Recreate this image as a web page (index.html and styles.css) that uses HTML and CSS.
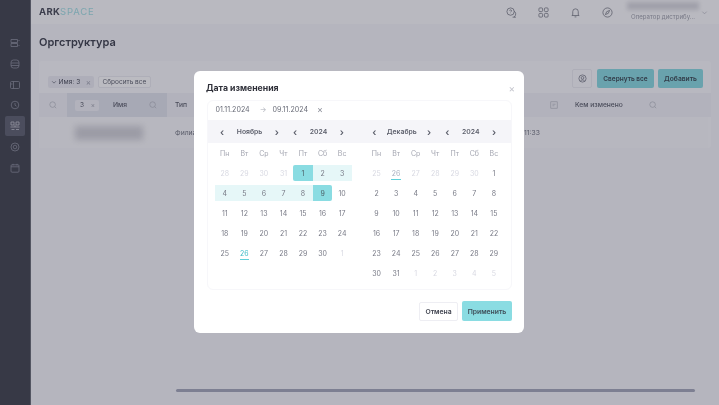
FILE: index.html
```html
<!DOCTYPE html>
<html>
<head>
  <meta charset="UTF-8" />
  <title>Оргструктура</title>
  <link rel="stylesheet" href="styles.css">
</head>
<body>

  <div class="app">
    <aside class="sidebar">
      <div class="side-item"><svg viewBox="0 0 10 10"><path d="M1 1.500h6.500v3H1zM1 5.500h6.500v3H1zM9 2v1M9 7v1"/></svg></div>
      <div class="side-item"><svg viewBox="0 0 10 10"><rect x="1" y="1" width="8" height="8" rx="2.500"/><path d="M1 4h8M1 6.500h8"/></svg></div>
      <div class="side-item"><svg viewBox="0 0 10 10"><rect x="0.500" y="1.500" width="9" height="7" rx="1"/><path d="M3.500 1.500v7M1 4h1.500"/></svg></div>
      <div class="side-item"><svg viewBox="0 0 10 10"><circle cx="5" cy="5" r="3.800"/><path d="M5 3v2.200l1.500 1"/></svg></div>
      <div class="side-item active"><svg viewBox="0 0 10 10"><path d="M1 1h3v3H1zM6 1h3v3H6zM0.500 6h9M1.500 8.500h3M6 8.500h3M5 4v2"/></svg></div>
      <div class="side-item"><svg viewBox="0 0 10 10"><circle cx="5" cy="5" r="4"/><circle cx="5" cy="5" r="1.800"/></svg></div>
      <div class="side-item"><svg viewBox="0 0 10 10"><rect x="1" y="1.800" width="8" height="7.400" rx="1"/><path d="M1 3.800h8M3 .8v1.600M7 .8v1.600"/></svg></div>
    </aside>

    <div class="main">
      <header class="top-bar">
        <div class="logo">ARK<span>SPACE</span></div>
        <div class="top-icons">
          <svg viewBox="0 0 12 12"><circle cx="5" cy="5" r="4"/><path d="M8.600 4.500a3.400 3.400 0 0 1 .4 6l1.400.6H7.200M4 4a1 1 0 1 1 1.400 1L5 5.800M5 7v.2"/></svg>
          <svg viewBox="0 0 12 12"><rect x="1" y="1" width="4" height="4" rx="1"/><rect x="7" y="1" width="4" height="4" rx="1"/><rect x="1" y="7" width="4" height="4" rx="1"/><rect x="7" y="7" width="4" height="4" rx="1"/></svg>
          <svg viewBox="0 0 12 12"><path d="M3 8.500V5a3 3 0 0 1 6 0v3.500l1 .8H2zM5 10.800h2"/></svg>
          <svg viewBox="0 0 12 12"><circle cx="6" cy="6" r="5"/><path d="M8.300 3.700 6.900 6.900 3.700 8.300 5.100 5.100z"/></svg>
        </div>
        <div class="user">
          <div class="user-name"></div>
          <div class="user-role">Оператор дистрибу...</div>
        </div>
        <svg class="user-arrow" viewBox="0 0 8 8"><path d="M1.500 3 4 5.500 6.500 3"/></svg>
      </header>

      <div class="content">
        <h1 class="page-title">Оргструктура</h1>

        <div class="card">
          <div class="toolbar">
            <div class="filters">
              <span class="chip">
                <svg viewBox="0 0 8 8"><path d="M1.500 3 4 5.500 6.500 3"/></svg>
                Имя: 3
                <i class="chip-x">×</i>
              </span>
              <span class="reset">Сбросить все</span>
            </div>
            <div class="actions">
              <button class="btn-icon"><svg viewBox="0 0 10 10"><circle cx="5" cy="5" r="4"/><circle cx="5" cy="4.300" r="1.500"/><path d="M2.500 8a3 3 0 0 1 5 0"/></svg></button>
              <button class="btn-teal wide">Свернуть все</button>
              <button class="btn-teal">Добавить</button>
            </div>
          </div>

          <div class="table-head">
            <div class="cell-search"><svg class="search" viewBox="0 0 10 10"><circle cx="4.500" cy="4.500" r="3.500"/><path d="m7 7 2 2"/></svg></div>
            <div class="cell-name">
              <span class="name-input">3 <i>×</i></span>
              <span class="head-label">Имя</span>
              <svg class="search" viewBox="0 0 10 10"><circle cx="4.500" cy="4.500" r="3.500"/><path d="m7 7 2 2"/></svg>
            </div>
            <span class="head-label type">Тип</span>
            <svg class="note" viewBox="0 0 10 10"><rect x="1" y="1" width="8" height="8"/><path d="M3 4h4M3 6h2.500"/></svg>
            <span class="head-label who">Кем изменено</span>
            <svg class="search" viewBox="0 0 10 10"><circle cx="4.500" cy="4.500" r="3.500"/><path d="m7 7 2 2"/></svg>
          </div>

          <div class="table-row">
            <div class="blur-name"></div>
            <span class="row-type">Филиал</span>
            <span class="row-time">11:33</span>
          </div>
        </div>
      </div>

      <div class="scroll-wrap"><div class="scroll-thumb"></div></div>
    </div>
  </div>

  <div class="overlay">
    <div class="modal">
      <div class="modal-head">
        <h2>Дата изменения</h2>
        <span class="close">×</span>
      </div>

      <div class="picker">
        <div class="range">
          <span>01.11.2024</span>
          <span class="arrow">→</span>
          <span>09.11.2024</span>
          <span class="clear">×</span>
        </div>

        <div class="months">
          <div class="month">
            <div class="month-head">
              <div class="switch"><b>‹</b><span>Ноябрь</span><b>›</b></div>
              <div class="switch year"><b>‹</b><span>2024</span><b>›</b></div>
            </div>
            <div class="days">
              <span class="wd">Пн</span><span class="wd">Вт</span><span class="wd">Ср</span><span class="wd">Чт</span><span class="wd">Пт</span><span class="wd">Сб</span><span class="wd">Вс</span>
              <span class="off">28</span><span class="off">29</span><span class="off">30</span><span class="off">31</span><span class="sel">1</span><span class="in">2</span><span class="in">3</span>
              <span class="in">4</span><span class="in">5</span><span class="in">6</span><span class="in">7</span><span class="in">8</span><span class="sel end">9</span><span>10</span>
              <span>11</span><span>12</span><span>13</span><span>14</span><span>15</span><span>16</span><span>17</span>
              <span>18</span><span>19</span><span>20</span><span>21</span><span>22</span><span>23</span><span>24</span>
              <span>25</span><span class="today">26</span><span>27</span><span>28</span><span>29</span><span>30</span><span class="off">1</span>
            </div>
          </div>

          <div class="month">
            <div class="month-head">
              <div class="switch"><b>‹</b><span>Декабрь</span><b>›</b></div>
              <div class="switch year"><b>‹</b><span>2024</span><b>›</b></div>
            </div>
            <div class="days">
              <span class="wd">Пн</span><span class="wd">Вт</span><span class="wd">Ср</span><span class="wd">Чт</span><span class="wd">Пт</span><span class="wd">Сб</span><span class="wd">Вс</span>
              <span class="off">25</span><span class="off today">26</span><span class="off">27</span><span class="off">28</span><span class="off">29</span><span class="off">30</span><span>1</span>
              <span>2</span><span>3</span><span>4</span><span>5</span><span>6</span><span>7</span><span>8</span>
              <span>9</span><span>10</span><span>11</span><span>12</span><span>13</span><span>14</span><span>15</span>
              <span>16</span><span>17</span><span>18</span><span>19</span><span>20</span><span>21</span><span>22</span>
              <span>23</span><span>24</span><span>25</span><span>26</span><span>27</span><span>28</span><span>29</span>
              <span>30</span><span>31</span><span class="off">1</span><span class="off">2</span><span class="off">3</span><span class="off">4</span><span class="off">5</span>
            </div>
          </div>
        </div>
      </div>

      <div class="modal-foot">
        <button class="btn-cancel">Отмена</button>
        <button class="btn-apply">Применить</button>
      </div>
    </div>
  </div>

</body>
</html>
```

FILE: styles.css
```css
* { box-sizing: border-box; }
body { margin: 0; width: 719px; height: 405px; overflow: hidden; background: #f6f6fb; color: #3c3f4c; font-family: Inter, sans-serif; }
svg { fill: none; stroke: currentColor; stroke-width: 0.8; display: block; }
i { font-style: normal; }
button { font-family: Inter, sans-serif; border: none; padding: 0; }

.app { display: flex; height: 405px; will-change: transform; filter: blur(0.4px); }

/* sidebar */
.sidebar {
  width: 31px; flex: none; background: #42454f; color: #8e919e;
  padding: 33px 5px 0;
  display: flex; flex-direction: column; gap: 0.8px;
  border-right: 1px solid #6b6d78;
}
.side-item { height: 20px; display: flex; align-items: center; justify-content: center; }
.side-item svg { width: 10px; height: 10px; }
.side-item.active { background: #5f6270; border-radius: 2px; color: #c5c7d0; }

/* top */
.main { flex: 1; display: flex; flex-direction: column; min-width: 0; }
.top-bar { height: 24px; background: #fdfdfe; display: flex; align-items: center; padding-left: 8px; flex: none; }
.logo { font-size: 9.500px; font-weight: 700; letter-spacing: 0.300px; color: #4a4d59; width: 467px; margin-top: -1px; }
.logo span { color: #a5e0e5; font-weight: 400; letter-spacing: 0.800px; }
.top-icons { display: flex; gap: 21px; color: #6d707c; width: 125px; }
.top-icons svg { width: 11px; height: 11px; }
.user { width: 70px; }
.user-name { height: 8px; margin: -3px 0 3px -4px; width: 72px; background: #d8d8de; filter: blur(2px); }
.user-role { font-size: 6.100px; color: #9fa1ac; white-space: nowrap; }
.user-arrow { width: 7px; height: 7px; color: #b5b6c0; margin-left: 0; }

.content { padding: 0 8px; flex: 1; }
.page-title { margin: 10px 0 11px; font-size: 11px; line-height: 16px; font-weight: 600; color: #40434f; }

.card { height: 87px; background: #fbfbfe; border-radius: 3px; width: 672px; }
.toolbar { height: 32px; display: flex; justify-content: space-between; padding: 8px 8px 0 9px; }
.filters { display: flex; gap: 4px; align-items: flex-start; padding-top: 7px; }
.chip {
  height: 12px; width: 46px; background: #ececf4; border-radius: 2px;
  font-size: 6.700px; display: flex; align-items: center; gap: 1.500px; padding-left: 3px; color: #4f525e;
}
.chip svg { width: 6px; height: 6px; }
.chip-x { margin-left: 4px; color: #a2a4b0; font-size: 8px; }
.reset { height: 12px; padding: 0 3.500px; line-height: 10px; border: 1px solid #ececf2; background: #fff; border-radius: 2px; font-size: 6.500px; color: #5c5f6b; white-space: nowrap; }
.actions { display: flex; gap: 4px; }
.btn-icon { width: 20px; height: 19px; background: #fbfbfe; border: 1px solid #ececf2; border-radius: 2px; color: #6d707c; display: flex; align-items: center; justify-content: center; margin-right: 1px; }
.btn-icon svg { width: 9px; height: 9px; }
.btn-teal { width: 45px; height: 19px; background: #8adce2; border-radius: 2px; font-size: 6.700px; font-weight: 600; color: #3c4a55; white-space: nowrap; }
.btn-teal.wide { width: 57px; font-size: 6.500px; }

.table-head { height: 24px; display: flex; align-items: center; background: #f3f3f8; width: 672px; color: #b1b3bd; }
.search { width: 8px; height: 8px; flex: none; }
.cell-search { width: 28px; padding-left: 10px; }
.cell-name { width: 100px; height: 24px; background: #e3e5ee; display: flex; align-items: center; padding-left: 8px; }
.name-input { width: 24px; height: 11px; background: #f3f3f8; border-radius: 2px; font-size: 6.500px; line-height: 11px; padding-left: 5px; color: #5c5f6b; }
.name-input i { color: #a2a4b0; margin-left: 5px; }
.cell-name .head-label { margin-left: 14px; width: 36px; }
.head-label { font-size: 6.700px; font-weight: 500; color: #5c5f6b; white-space: nowrap; }
.type { margin-left: 8px; width: 375px; }
.note { width: 8px; height: 8px; margin-right: 17px; }
.who { width: 74px; }

.table-row { height: 31px; width: 669px; background: #fafafc; display: flex; align-items: center; }
.blur-name { width: 68px; height: 14px; margin-left: 36px; background: #d2d2d8; filter: blur(3px); }
.row-type { margin-left: 32px; font-size: 6.800px; color: #747783; width: 349px; }
.row-time { font-size: 6.800px; color: #747783; }

.scroll-wrap { height: 16px; flex: none; padding-left: 145px; }
.scroll-thumb { width: 519px; height: 3px; background: #a6a9bc; border-radius: 2px; }

/* modal */
.overlay { position: fixed; top: 0; left: 0; width: 100%; height: 100%; padding: 0 1px 1px 0; background: rgba(30, 30, 50, 0.3); display: flex; align-items: center; justify-content: center; }
.modal { width: 330px; height: 262px; background: #fff; border-radius: 6px; padding: 0 12px 0 12.500px; will-change: transform; filter: blur(0.4px); }
.modal-head { height: 29px; display: flex; align-items: center; justify-content: space-between; padding-top: 4px; }
.modal-head h2 { margin: 0 0 0 -0.500px; font-size: 8.700px; font-weight: 700; color: #2f3039; }
.close { font-size: 10px; color: #c4c5cd; margin-right: -3px; }

.picker { height: 190px; border: 1px solid #f7f7fa; border-radius: 6px; }
.range { height: 19px; display: flex; align-items: center; padding: 0 0 2px 8px; font-size: 7.100px; color: #676a76; }
.arrow { margin: 0 6px 0 10px; color: #a9acb6; }
.clear { margin-left: 9px; font-size: 9px; color: #8b8e99; }

.months { display: flex; }
.month { width: 153px; }
.month-head { height: 23px; background: #f5f5f9; display: flex; padding-left: 12.500px; gap: 14px; align-items: center; }
.month:last-child .month-head { padding-left: 13px; }
.switch { display: flex; align-items: center; justify-content: space-between; width: 59px; font-size: 6.800px; font-weight: 600; color: #5c5f6b; }
.switch.year { width: 51px; }
.switch b { font-size: 10px; line-height: 10px; font-weight: 600; }

.days { display: grid; grid-template-columns: repeat(7, 19.570px); grid-auto-rows: 16px; row-gap: 4px; padding: 2px 0 0 7.500px; font-size: 7px; color: #787a86; }
.days span { display: flex; align-items: center; justify-content: center; position: relative; }
.days .wd { color: #a4a6b1; }
.days .off { color: #d8d9e2; }
.days .in { background: #e6f7f8; }
.days .sel { background: #8adce2; border-radius: 2px 0 0 2px; color: #4c6068; }
.days .sel.end { border-radius: 0 2px 2px 0; }
.days .today { color: #40bcc8; }
.days .today::after { content: ""; position: absolute; left: 5px; right: 5px; bottom: 1px; height: 1px; background: #5fd0d9; }
.days .off.today { color: #aab0c0; }

.modal-foot { display: flex; justify-content: flex-end; gap: 4px; padding-top: 11px; align-items: flex-end; }
.btn-cancel { width: 39px; height: 19px; background: #fff; border: 1px solid #eeeef3; border-radius: 2px; font-size: 6.800px; font-weight: 600; color: #3f424e; }
.btn-apply { width: 50px; height: 20px; background: #8adce2; border-radius: 2px; font-size: 6.800px; font-weight: 600; color: #3f4d58; }
```
